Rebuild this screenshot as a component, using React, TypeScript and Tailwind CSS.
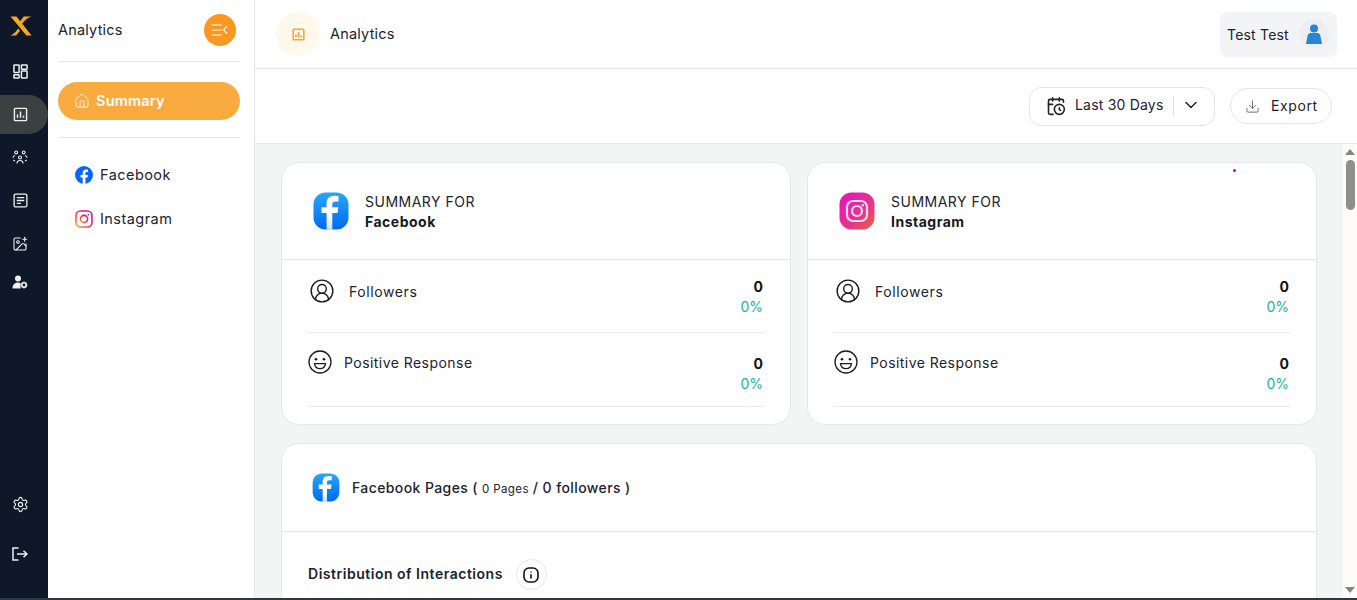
import React from "react";
import {
  CalendarClock,
  ChevronDown,
  CircleUserRound,
  Download,
  House,
  Settings,
  ImagePlus,
} from "lucide-react";

function DashIcon() {
  return (
    <svg width="15" height="15" viewBox="0 0 16 16" fill="none" stroke="currentColor" strokeWidth="1.6">
      <rect x="1" y="1" width="5.5" height="8" rx="0.6" />
      <rect x="9" y="1" width="6" height="4.5" rx="0.6" />
      <rect x="1" y="11.5" width="5.5" height="3.5" rx="0.6" />
      <rect x="9" y="7.5" width="6" height="7.5" rx="0.6" />
    </svg>
  );
}

function ChartIcon({ size = 16, weight = 1.5 }: { size?: number; weight?: number }) {
  return (
    <svg width={size} height={size} viewBox="0 0 16 16" fill="none" stroke="currentColor" strokeWidth={weight}>
      <rect x="1.5" y="1.5" width="13" height="13" rx="1" />
      <path d="M4.8 11.5V8M8 11.5V4.8M11.2 11.5V9.3" />
    </svg>
  );
}

function PeopleIcon() {
  return (
    <svg width="16" height="15" viewBox="0 0 17 16" fill="none" stroke="currentColor" strokeWidth="1.2">
      <circle cx="4.4" cy="2.6" r="1.5" />
      <circle cx="12.4" cy="2.6" r="1.5" />
      <circle cx="8.5" cy="8" r="1.6" />
      <path d="M1 8.2c0-1.4 1-2.2 2.2-2.4M16 8.2c0-1.4-1-2.2-2.2-2.4M5.3 14.5c0-2 1.3-3.3 3.2-3.3s3.2 1.3 3.2 3.3" />
      <path d="M1.5 10.5c.4.6 1 1 1.7 1.2M15.5 10.5c-.4.6-1 1-1.7 1.2" />
    </svg>
  );
}

function NewsIcon() {
  return (
    <svg width="15" height="15" viewBox="0 0 16 16" fill="none" stroke="currentColor" strokeWidth="1.4">
      <rect x="1.2" y="1.2" width="13.6" height="13.6" rx="1.6" />
      <path d="M4 5h8M4 8h8M4 11h4.5" />
    </svg>
  );
}

function UserGear() {
  return (
    <svg width="16" height="14" viewBox="0 0 16 14">
      <circle cx="6" cy="3.4" r="3" fill="currentColor" />
      <path d="M0.5 13.5c0-3.6 2-6 5.5-6 1 0 1.8.2 2.500.5v5.500z" fill="currentColor" />
      <circle cx="12" cy="10" r="2.2" fill="none" stroke="currentColor" strokeWidth="1.6" />
      <path d="M12 6.500v1.200M12 12.300v1.200M8.500 10h1.200M14.300 10h1.200M9.600 7.600l.8.8M13.600 11.600l.8.8M14.400 7.600l-.8.8M10.400 11.600l-.8.8" stroke="currentColor" strokeWidth="1.2" />
    </svg>
  );
}

function ExitIcon() {
  return (
    <svg width="16" height="14" viewBox="0 0 16 14" fill="none" stroke="currentColor" strokeWidth="1.5">
      <path d="M6.5 1H1v12h5.500" />
      <path d="M5 7h10M11.500 3.800L15 7l-3.500 3.200" />
    </svg>
  );
}

function Logo() {
  return (
    <svg width="22" height="20" viewBox="0 0 22 20">
      <path d="M0.5 0.500H6.500L21.500 19.500H16.500C14.500 17.500 13 15.500 11.500 13.500Z" fill="#f7a823" />
      <path d="M21.500 0.500C18 1.500 15.500 3.500 13.300 6.300L11.600 8.400L9.600 5.900L13.800 0.500ZM0.500 19.500C3.500 18 6 15.500 8.200 12.400L10 14.700L6 19.500Z" fill="#f7a823" />
    </svg>
  );
}

function FbRound() {
  return (
    <svg width="18" height="18" viewBox="0 0 18 18">
      <circle cx="9" cy="9" r="9" fill="#0866ff" />
      <path
        d="M12.500 11.500l.45-2.600h-2.500V7.300c0-.8.35-1.300 1.400-1.300h1.150V3.800c-.6-.1-1.300-.2-1.950-.2-2.100 0-3.350 1.200-3.350 3.400v1.900H5.500v2.600h2.200V18h2.750v-6.500z"
        fill="#fff"
      />
    </svg>
  );
}

function IgSmall() {
  return (
    <svg width="18" height="18" viewBox="0 0 18 18" fill="none">
      <defs>
        <linearGradient id="igs" x1="0" y1="1" x2="1" y2="0">
          <stop offset="0" stopColor="#fdb32b" />
          <stop offset="0.45" stopColor="#ee2a4f" />
          <stop offset="1" stopColor="#c0189f" />
        </linearGradient>
      </defs>
      <rect x="1" y="1" width="16" height="16" rx="4.500" stroke="url(#igs)" strokeWidth="1.6" />
      <circle cx="9" cy="9" r="3.6" stroke="url(#igs)" strokeWidth="1.6" />
      <circle cx="13.300" cy="4.700" r="0.9" fill="#c0189f" />
    </svg>
  );
}

function FbSquare({ w, h }: { w: number; h: number }) {
  return (
    <svg width={w} height={h} viewBox="0 0 36 38">
      <defs>
        <linearGradient id="fbq" x1="0" y1="0" x2="0" y2="1">
          <stop offset="0" stopColor="#27a8fb" />
          <stop offset="1" stopColor="#0069ee" />
        </linearGradient>
        <linearGradient id="fbf" x1="0" y1="0" x2="0" y2="1">
          <stop offset="0.6" stopColor="#ffffff" />
          <stop offset="1" stopColor="#c3def8" />
        </linearGradient>
      </defs>
      <rect x="0.5" y="0.5" width="35" height="37" rx="12" fill="url(#fbq)" />
      <path
        d="M24.500 21l.8-5.800h-6v-3c0-1.700.7-2.800 3-2.800h3.200V4.200c-1-.2-2.600-.4-4.300-.4-4.800 0-7.600 2.800-7.600 7.700v3.700H8.500V21h5.100v17h5.700V21z"
        fill="url(#fbf)"
      />
    </svg>
  );
}

function IgSquare() {
  return (
    <svg width="36" height="38" viewBox="0 0 36 38" fill="none">
      <defs>
        <linearGradient id="igq" x1="0" y1="0" x2="1" y2="1">
          <stop offset="0" stopColor="#e512c0" />
          <stop offset="0.6" stopColor="#e5358a" />
          <stop offset="1" stopColor="#e9643a" />
        </linearGradient>
      </defs>
      <rect x="0.5" y="0.5" width="35" height="37" rx="12" fill="url(#igq)" />
      <rect x="8" y="9" width="20" height="20" rx="6" stroke="#fbdcec" strokeWidth="2.2" />
      <circle cx="18" cy="19" r="5" stroke="#fbdcec" strokeWidth="2.2" />
      <circle cx="23.800" cy="13.200" r="1.200" fill="#fbdcec" />
    </svg>
  );
}

function Avatar() {
  return (
    <svg width="16" height="20" viewBox="0 0 16 20" fill="#2a83d3">
      <circle cx="8" cy="4.500" r="4" />
      <path d="M4.500 9h7c1.500 0 2.300 1 2.800 2.600L16 20H0l1.700-8.400C2.200 10 3 9 4.500 9z" />
    </svg>
  );
}

function SmileFace() {
  return (
    <svg width="24" height="24" viewBox="0 0 24 24" fill="none" stroke="#1c1c1c" strokeWidth="1.3">
      <circle cx="12" cy="12" r="11" />
      <circle cx="8" cy="9.300" r="1.300" fill="#1c1c1c" stroke="none" />
      <circle cx="16" cy="9.300" r="1.300" fill="#1c1c1c" stroke="none" />
      <path d="M6.500 13.600h11c-.4 3-2.700 5-5.500 5s-5.100-2-5.500-5z" />
    </svg>
  );
}

function RailItem({ h, active, children }: { h: string; active?: boolean; children: React.ReactNode }) {
  return (
    <div className={`flex w-12 items-center text-[#eef0f2] ${h}`}>
      {active ? (
        <div className="flex h-[39px] w-12 items-center rounded-r-[20px] bg-[#3b4141] pr-2">
          <div className="flex w-10 justify-center">{children}</div>
        </div>
      ) : (
        <div className="flex w-10 justify-center">{children}</div>
      )}
    </div>
  );
}

function MetricRow({
  icon,
  label,
  value,
  labelClass,
  heightClass,
  valueClass,
}: {
  icon: React.ReactNode;
  label: string;
  value: string;
  labelClass: string;
  heightClass: string;
  valueClass: string;
}) {
  return (
    <div className={`flex justify-between border-b border-[#e8eaea] ${heightClass}`}>
      <div className={`flex items-center text-[14px] text-[#1b2230] ${labelClass}`}>
        {icon}
        <span>{label}</span>
      </div>
      <div className={`pr-[1px] text-right tracking-normal ${valueClass}`}>
        <div className="text-[14px] leading-5 font-bold text-[#111]">{value}</div>
        <div className="text-[14px] leading-5 text-[#19b394]">0%</div>
      </div>
    </div>
  );
}

function SummaryCard({ name, icon, dot }: { name: string; icon: React.ReactNode; dot?: boolean }) {
  return (
    <div className="relative h-[263px] rounded-[18px] border border-[#e6e8e8] bg-white">
      {dot && <div className="absolute top-[6px] left-[425px] h-[3px] w-[3px] rounded-full bg-[#d9123f]" />}
      <div className="flex h-[97px] items-center gap-4 border-b border-[#e6e8e8] pl-[31px]">
        {icon}
        <div className="pt-[1px] text-[14px] leading-5 tracking-[0.5px] text-[#1b2230]">
          <div>SUMMARY FOR</div>
          <div className="font-bold text-[#16181d]">{name}</div>
        </div>
      </div>
      <div className="pr-[26px] pl-[26px]">
        <MetricRow
          icon={<CircleUserRound size={26} strokeWidth={1.3} className="text-[#1c1c1c]" />}
          label="Followers"
          value="0"
          labelClass="h-[62px] gap-[14px] pl-[1px] tracking-[0.6px]"
          heightClass="h-[73px]"
          valueClass="pt-[17px]"
        />
        <MetricRow
          icon={<SmileFace />}
          label="Positive Response"
          value="0"
          labelClass="h-[58px] gap-[12px] tracking-[0.45px]"
          heightClass="h-[74px]"
          valueClass="pt-[21px]"
        />
      </div>
    </div>
  );
}

export default function App() {
  return (
    <div className="flex h-[600px] w-full flex-col overflow-hidden bg-white font-['Inter',sans-serif] tracking-[0.2px] text-[#1b2230]">
      <div className="flex h-[598px] min-h-0">
        {/* icon rail */}
        <aside className="flex w-12 shrink-0 flex-col justify-between bg-[#0f1828] pb-[20px]">
          <div>
            <div className="flex h-[50px] w-[42px] items-center justify-center pt-[2px]">
              <Logo />
            </div>
            <RailItem h="h-[43px]">
              <DashIcon />
            </RailItem>
            <RailItem h="h-[43px]" active>
              <ChartIcon size={15} />
            </RailItem>
            <RailItem h="h-[43px]">
              <PeopleIcon />
            </RailItem>
            <RailItem h="h-[43px]">
              <NewsIcon />
            </RailItem>
            <RailItem h="h-[43px]">
              <ImagePlus size={16} strokeWidth={1.6} />
            </RailItem>
            <RailItem h="h-[33px]">
              <UserGear />
            </RailItem>
          </div>
          <div>
            <RailItem h="h-[49px]">
              <Settings size={17} strokeWidth={1.6} />
            </RailItem>
            <RailItem h="h-[49px]">
              <ExitIcon />
            </RailItem>
          </div>
        </aside>

        {/* section sidebar */}
        <aside className="w-[207px] shrink-0 border-r border-[#e6e8e8] bg-white">
          <div className="pr-[14px] pl-[10px]">
            <div className="flex h-[62px] items-center justify-between border-b border-[#e6e8e8] pr-1 pb-[2px]">
              <span className="text-[14.5px]">Analytics</span>
              <button className="flex h-8 w-8 items-center justify-center rounded-full bg-[#fb9821]">
                <svg width="16" height="12" viewBox="0 0 16 12" fill="none" stroke="#fff" strokeWidth="1.2">
                  <path d="M0 1h10M0 6h10M0 11h10M15 2.500L11.500 6l3.500 3.500" />
                </svg>
              </button>
            </div>
            <div className="flex h-[76px] items-center border-b border-[#e6e8e8] pt-[2px]">
              <div className="flex h-[38px] w-full items-center gap-[6px] rounded-full bg-[#faab3f] pl-4 text-[14.5px] font-semibold text-white">
                <House size={16} strokeWidth={1.2} />
                <span>Summary</span>
              </div>
            </div>
            <div className="pt-[15px] pl-[17px] text-[14.5px] tracking-[0.45px]">
              <div className="flex h-[44px] items-center gap-[7px]">
                <FbRound />
                <span>Facebook</span>
              </div>
              <div className="flex h-[44px] items-center gap-[7px]">
                <IgSmall />
                <span>Instagram</span>
              </div>
            </div>
          </div>
        </aside>

        {/* main */}
        <main className="flex min-w-0 flex-1 flex-col">
          <header className="flex h-[69px] shrink-0 items-center justify-between border-b border-[#e6e8e8] pr-5 pl-[21px]">
            <div className="flex items-center gap-[10px]">
              <div className="flex h-11 w-11 items-center justify-center rounded-full bg-[#fff9ec] text-[#fba43a]">
                <ChartIcon size={13} weight={2} />
              </div>
              <span className="text-[14.5px]">Analytics</span>
            </div>
            <div className="flex h-[45px] w-[117px] items-center justify-between rounded-lg bg-[#f3f4f5] pr-2 pl-[7px]">
              <span className="text-[14px]">Test Test</span>
              <div className="flex h-[30px] w-[30px] items-center justify-center rounded-full bg-[#eceef0]">
                <Avatar />
              </div>
            </div>
          </header>

          <div className="flex h-[75px] shrink-0 items-center justify-end gap-[15px] border-b border-[#e6e8e8] pr-[25px]">
            <button className="flex h-[39px] w-[186px] items-center rounded-xl border border-[#e4e6e6] pl-4 text-[14px]">
              <CalendarClock size={20} strokeWidth={1.9} className="text-[#222]" />
              <span className="ml-[9px] -translate-y-[2px]">Last 30 Days</span>
              <span className="ml-[9px] h-[20px] w-px bg-[#dddfdf]" />
              <ChevronDown size={20} strokeWidth={1.8} className="ml-[7px] -translate-y-[1px] text-[#222]" />
            </button>
            <button className="flex h-[36px] w-[102px] items-center rounded-full border border-[#e4e6e6] pl-[14px] text-[14px] tracking-[0.6px]">
              <Download size={15} strokeWidth={1.2} className="text-[#444]" />
              <span className="ml-[11px] -translate-y-[1px]">Export</span>
            </button>
          </div>

          <div className="flex min-h-0 flex-1">
            <div className="min-w-0 flex-1 overflow-hidden bg-[#f3f5f5] pt-[18px] pr-[26px] pl-[26px]">
              <div className="grid grid-cols-2 gap-4">
                <SummaryCard name="Facebook" icon={<FbSquare w={36} h={38} />} />
                <SummaryCard name="Instagram" icon={<IgSquare />} dot />
              </div>
              <div className="mt-[18px] h-[300px] rounded-[18px] border border-[#e6e8e8] bg-white">
                <div className="flex h-[88px] items-center gap-3 border-b border-[#e6e8e8] pl-[30px]">
                  <FbSquare w={28} h={29} />
                  <div className="flex items-baseline gap-[4px] text-[14px] font-medium tracking-[0.4px] text-[#1b2230]">
                    <span>Facebook Pages (</span>
                    <span className="text-[11.5px] font-normal">0 Pages</span>
                    <span>/ 0 followers )</span>
                  </div>
                </div>
                <div className="flex items-center gap-[13px] pt-[27px] pl-[26px]">
                  <span className="-translate-y-[1px] text-[14px] font-semibold tracking-[0.52px]">
                    Distribution of Interactions
                  </span>
                  <div className="flex h-[31px] w-[31px] items-center justify-center rounded-full border border-[#e6e8e8]">
                    <svg width="16" height="16" viewBox="0 0 16 16" fill="none" stroke="#111" strokeWidth="1.6">
                      <rect x="1" y="1" width="14" height="14" rx="5" />
                      <path d="M8 7.300V11.500M8 4.400v1" />
                    </svg>
                  </div>
                </div>
              </div>
            </div>

            {/* scrollbar */}
            <div className="flex w-[14px] shrink-0 flex-col items-center justify-between bg-[#fdfcfb] py-[5px]">
              <div className="flex flex-col items-center gap-[5px]">
                <div className="h-0 w-0 border-x-[5px] border-b-[6px] border-x-transparent border-b-[#858585]" />
                <div className="h-[50px] w-[9px] rounded-full bg-[#8f8f8f]" />
              </div>
              <div className="h-0 w-0 border-x-[5px] border-t-[6px] border-x-transparent border-t-[#858585]" />
            </div>
          </div>
        </main>
      </div>
      <div className="h-[2px] shrink-0 bg-[#2b3a42]" />
    </div>
  );
}
